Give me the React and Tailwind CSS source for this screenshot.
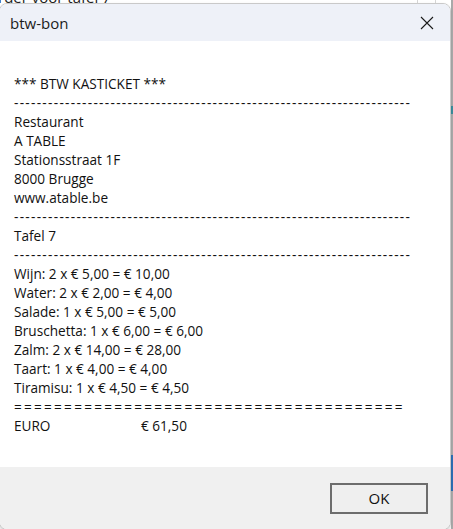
import React from "react";

const font = { fontFamily: '"Open Sans", "Noto Sans", sans-serif' };

const lines = [
	"Wijn: 2 x € 5,00 = € 10,00",
	"Water: 2 x € 2,00 = € 4,00",
	"Salade: 1 x € 5,00 = € 5,00",
	"Bruschetta: 1 x € 6,00 = € 6,00",
	"Zalm: 2 x € 14,00 = € 28,00",
	"Taart: 1 x € 4,00 = € 4,00",
	"Tiramisu: 1 x € 4,50 = € 4,50",
];

function Dashes() {
	return (
		<div className="h-[19px] overflow-hidden whitespace-nowrap tracking-[1.3px]">
			{"-".repeat(70)}
		</div>
	);
}

export default function App() {
	return (
		<div
			className="relative w-[453px] h-[529px] overflow-hidden bg-[#f3f3f3] text-[#1a1a1a]"
			style={font}
		>
			{/* window behind the dialog */}
			<div className="absolute left-0 top-0 w-[453px] h-[40px] bg-white">
				<div className="absolute left-[-2px] top-[-14px] text-[15px] text-[#222]">
					rder voor tafel 7
				</div>
				<div className="absolute left-[417px] top-0 w-px h-[6px] bg-[#d6d6d6]" />
				<div className="absolute left-[435px] top-0 w-px h-[6px] bg-[#d6d6d6]" />
			</div>
			<div className="absolute right-0 top-0 w-[2px] h-[529px] bg-[#a9a9a9]" />
			<div className="absolute right-0 top-[106px] w-[2px] h-[8px] bg-[#3c8c9c]" />
			<div className="absolute right-0 top-[455px] w-[2px] h-[36px] bg-[#2d6fb4]" />

			{/* dialog */}
			<div className="absolute left-[-1px] top-[3px] w-[452px] h-[527px] flex flex-col rounded-[8px] overflow-hidden border border-[#c9c9c9] bg-white shadow">
				<div className="h-[37px] shrink-0 flex items-center justify-between bg-[#eef1f8] pl-[10px] pr-[12px]">
					<span className="text-[15px] text-[#1b1b1b] pt-[1px]">btw-bon</span>
					<svg width="16" height="16" viewBox="0 0 16 16" className="mr-[3px]">
						<path d="M2 2 L14 14 M14 2 L2 14" stroke="#1b1b1b" strokeWidth="1.1" fill="none" />
					</svg>
				</div>
				<div className="h-[426px] shrink-0 bg-white pl-[14px] pt-[33px] text-[13.6px] leading-[19px] text-[#111]">
					<div className="h-[19px]">*** BTW KASTICKET ***</div>
					<Dashes />
					<div>Restaurant</div>
					<div>A TABLE</div>
					<div>Stationsstraat 1F</div>
					<div>8000 Brugge</div>
					<div>www.atable.be</div>
					<Dashes />
					<div>Tafel 7</div>
					<Dashes />
					{lines.map((l) => (
						<div key={l}>{l}</div>
					))}
					<div className="h-[19px] overflow-hidden whitespace-nowrap tracking-[2.25px]">
						{"=".repeat(39)}
					</div>
					<div className="flex">
						<span className="w-[127px]">EURO</span>
						<span>€ 61,50</span>
					</div>
				</div>
				<div className="flex-1 bg-[#f0f0f0] flex justify-end items-start pt-[16px] pr-[22px]">
					<button className="w-[98px] h-[31px] border-2 border-[#6d6d6d] bg-[#efefef] text-[15px] text-[#111]">
						OK
					</button>
				</div>
			</div>
		</div>
	);
}
